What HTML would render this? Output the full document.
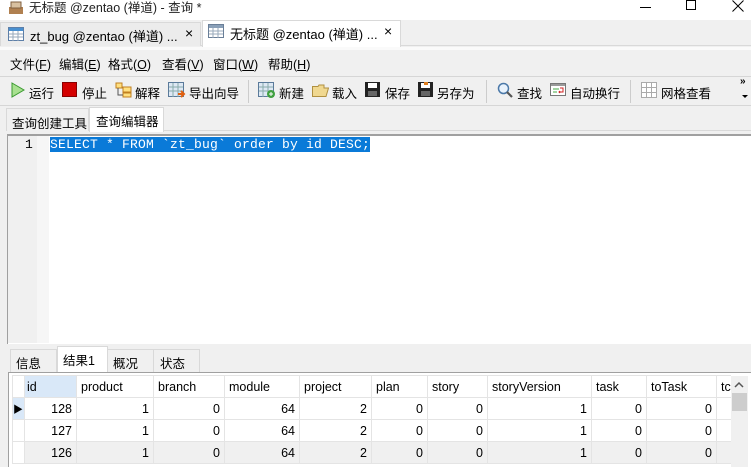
<!DOCTYPE html>
<html><head><meta charset="utf-8"><style>
*{margin:0;padding:0;box-sizing:border-box}
body{width:751px;height:467px;overflow:hidden;background:#f0f0f0;font-family:"Liberation Sans","Noto Sans CJK SC",sans-serif;font-size:12px;color:#000;position:relative}
.a{position:absolute;white-space:nowrap}
.ic{position:absolute}
td{border-right:1px solid #e4e4e4;border-bottom:1px solid #e4e4e4;padding:0 4px;height:22px;font-size:12.5px}
td.n{text-align:right}
.m{position:absolute;top:54px;font-size:12.5px;white-space:nowrap}
</style></head><body>
<div class="a" style="left:0;top:0;width:751px;height:20px;background:#fff"></div>
<svg class="ic" style="left:8px;top:1px" width="16" height="14"><rect x="1" y="6" width="14" height="7" fill="#b08050"/><rect x="3" y="1" width="10" height="6" fill="#d8c0a0" stroke="#806040"/></svg>
<div class="a" style="left:29px;top:0;font-size:12.5px;line-height:16px;color:#222">无标题 @zentao (禅道) - 查询 *</div>
<div class="a" style="left:640px;top:7px;width:11px;height:1px;background:#000"></div>
<div class="a" style="left:686px;top:0;width:10px;height:10px;border:1px solid #000"></div>
<svg class="ic" style="left:732px;top:0" width="12" height="12"><path d="M0.5 0.5L11.5 11.5M11.5 0.5L0.5 11.5" stroke="#000"/></svg>
<div class="a" style="left:0;top:21px;width:751px;height:25px;background:#f0f0f0;border-bottom:1px solid #d9d9d9"></div>
<div class="a" style="left:0;top:22px;width:201px;height:24px;background:#ececec;border:1px solid #d9d9d9;border-bottom:none"></div>
<svg class="ic" style="left:8px;top:27px" width="16" height="14"><rect x="0.5" y="0.5" width="15" height="13" fill="#fff" stroke="#5d7fa8"/><rect x="1" y="1" width="14" height="3" fill="#4a90d0"/><path d="M1 7H15M1 10H15M5 4V14M10 4V14" stroke="#9ab"/></svg>
<div class="a" style="left:30px;top:26px;font-size:13px">zt_bug @zentao (禅道) ...</div>
<div class="a" style="left:185px;top:25px;font-size:14px">×</div>
<div class="a" style="left:202px;top:20px;width:199px;height:27px;background:#fff;border:1px solid #d9d9d9;border-bottom:none"></div>
<svg class="ic" style="left:208px;top:24px" width="16" height="14"><rect x="0.5" y="0.5" width="15" height="13" fill="#fff" stroke="#6a7f98"/><rect x="1" y="1" width="14" height="3" fill="#8aa0b8"/><path d="M1 7H15M1 10H15M5 4V14M10 4V14" stroke="#9ab"/></svg>
<div class="a" style="left:230px;top:24px;font-size:13px">无标题 @zentao (禅道) ...</div>
<div class="a" style="left:384px;top:23px;font-size:14px">×</div>
<div class="a" style="left:0;top:47px;width:751px;height:3px;background:#fafafa"></div>
<div class="m" style="left:10px">文件(<u>F</u>)</div>
<div class="m" style="left:59px">编辑(<u>E</u>)</div>
<div class="m" style="left:108px">格式(<u>O</u>)</div>
<div class="m" style="left:162px">查看(<u>V</u>)</div>
<div class="m" style="left:213px">窗口(<u>W</u>)</div>
<div class="m" style="left:268px">帮助(<u>H</u>)</div>
<div class="a" style="left:0;top:76px;width:751px;height:1px;background:#d6d6d6"></div>
<svg class="ic" style="left:11px;top:82px" width="14" height="16"><path d="M1 1L13 8L1 15Z" fill="#a8e090" stroke="#3a9a30"/></svg>
<div class="a" style="left:29px;top:83px;font-size:12.5px">运行</div>
<div class="a" style="left:62px;top:82px;width:15px;height:15px;background:#d40000;border:1px solid #800"></div>
<div class="a" style="left:82px;top:83px;font-size:12.5px">停止</div>
<svg class="ic" style="left:115px;top:82px" width="17" height="16"><rect x="1" y="1" width="6" height="5" fill="#ffe080" stroke="#c08020"/><rect x="8" y="5" width="8" height="5" fill="#ffe080" stroke="#c08020"/><rect x="8" y="11" width="8" height="4" fill="#ffe080" stroke="#c08020"/><path d="M3 6V13H8" stroke="#555" fill="none"/></svg>
<div class="a" style="left:135px;top:83px;font-size:12.5px">解释</div>
<svg class="ic" style="left:168px;top:82px" width="18" height="16"><rect x="0.5" y="0.5" width="15" height="14" fill="#dde8f4" stroke="#5a7a9a"/><path d="M1 5H15M1 9H15M5 1V15M10 1V15" stroke="#8aa"/><path d="M10 12H16M13 9L16 12L13 15" stroke="#e06010" stroke-width="2" fill="none"/></svg>
<div class="a" style="left:189px;top:83px;font-size:12.5px">导出向导</div>
<div class="a" style="left:248px;top:80px;width:1px;height:23px;background:#ccc"></div>
<svg class="ic" style="left:258px;top:82px" width="18" height="16"><rect x="0.5" y="0.5" width="15" height="14" fill="#dde8f4" stroke="#5a7a9a"/><path d="M1 5H15M1 9H15M5 1V15M10 1V15" stroke="#8aa"/><circle cx="13" cy="12" r="4" fill="#40a040"/><path d="M11 12H15M13 10V14" stroke="#fff"/></svg>
<div class="a" style="left:279px;top:83px;font-size:12.5px">新建</div>
<svg class="ic" style="left:312px;top:84px" width="17" height="13"><path d="M0.5 2.5H6L7 1H12V4H16.5L14 12.5H0.5Z" fill="#f0d890" stroke="#b09040"/></svg>
<div class="a" style="left:332px;top:83px;font-size:12.5px">载入</div>
<svg class="ic" style="left:365px;top:82px" width="15" height="15"><rect x="0" y="0" width="15" height="15" fill="#222"/><rect x="3" y="1" width="9" height="5" fill="#fff"/><rect x="3" y="9" width="9" height="5" fill="#666"/></svg>
<div class="a" style="left:385px;top:83px;font-size:12.5px">保存</div>
<svg class="ic" style="left:418px;top:82px" width="15" height="15"><rect x="0" y="0" width="15" height="15" fill="#222"/><rect x="3" y="1" width="9" height="5" fill="#fff"/><rect x="3" y="9" width="9" height="5" fill="#666"/><rect x="6" y="0" width="4" height="3" fill="#e08020"/></svg>
<div class="a" style="left:437px;top:83px;font-size:12.5px">另存为</div>
<div class="a" style="left:486px;top:80px;width:1px;height:23px;background:#ccc"></div>
<svg class="ic" style="left:497px;top:82px" width="16" height="16"><circle cx="6.5" cy="6.5" r="5" fill="#e8f2fc" stroke="#4a78a8" stroke-width="1.5"/><path d="M10 10L15 15" stroke="#555" stroke-width="2.2"/></svg>
<div class="a" style="left:517px;top:83px;font-size:12.5px">查找</div>
<svg class="ic" style="left:550px;top:83px" width="16" height="13"><rect x="0.5" y="0.5" width="15" height="12" fill="#fff" stroke="#777"/><rect x="1" y="1" width="14" height="2" fill="#999"/><path d="M3 6H9M3 9H7" stroke="#4a4"/><path d="M10 5H13V9H9M10 8L9 9L10 10" stroke="#d02020" fill="none"/></svg>
<div class="a" style="left:570px;top:83px;font-size:12.5px">自动换行</div>
<div class="a" style="left:630px;top:80px;width:1px;height:23px;background:#ccc"></div>
<svg class="ic" style="left:641px;top:82px" width="16" height="16"><path d="M0.5 0.5H15.5V15.5H0.5ZM0.5 5.5H15.5M0.5 10.5H15.5M5.5 0.5V15.5M10.5 0.5V15.5" stroke="#aaa" fill="#fff"/></svg>
<div class="a" style="left:661px;top:83px;font-size:12.5px">网格查看</div>
<div class="a" style="left:740px;top:76px;font-size:10px;font-weight:bold">»</div>
<div class="a" style="left:742px;top:95px;width:0;height:0;border:3px solid transparent;border-top:3px solid #000"></div>
<div class="a" style="left:0;top:105px;width:751px;height:1px;background:#d6d6d6"></div>
<div class="a" style="left:6px;top:108px;width:83px;height:23px;border:1px solid #d9d9d9;border-bottom:none;background:#f0f0f0"></div>
<div class="a" style="left:12px;top:113px;font-size:12.5px">查询创建工具</div>
<div class="a" style="left:89px;top:107px;width:75px;height:25px;background:#fff;border:1px solid #d9d9d9;border-bottom:none"></div>
<div class="a" style="left:96px;top:111px;font-size:12.5px">查询编辑器</div>
<div class="a" style="left:164px;top:130px;width:587px;height:1px;background:#d9d9d9"></div>
<div class="a" style="left:7px;top:134px;width:744px;height:210px;background:#fff;border-top:2px solid #a0a0a0;border-left:1px solid #a0a0a0"></div>
<div class="a" style="left:8px;top:136px;width:29px;height:207px;background:#f0f0f0"></div>
<div class="a" style="left:37px;top:136px;width:12px;height:207px;background:#f6f6f6"></div>
<div class="a" style="left:25px;top:137px;font-family:'Liberation Mono',monospace;font-size:13px;line-height:15px">1</div>
<div class="a" style="left:50px;top:137px;height:15px;background:#0a7ad8;color:#fff;font-family:'Liberation Mono',monospace;font-size:13px;line-height:15px;letter-spacing:0.2px">SELECT * FROM `zt_bug` order by id DESC;</div>
<div class="a" style="left:0;top:344px;width:751px;height:4px;background:#f0f0f0"></div>
<div class="a" style="left:10px;top:349px;width:47px;height:24px;border:1px solid #d9d9d9;border-bottom:none"></div>
<div class="a" style="left:16px;top:353px;font-size:12.5px">信息</div>
<div class="a" style="left:57px;top:346px;width:51px;height:27px;background:#fff;border:1px solid #d9d9d9;border-bottom:none"></div>
<div class="a" style="left:63px;top:350px;font-size:12.5px">结果1</div>
<div class="a" style="left:108px;top:349px;width:46px;height:24px;border:1px solid #d9d9d9;border-bottom:none;border-left:none"></div>
<div class="a" style="left:113px;top:353px;font-size:12.5px">概况</div>
<div class="a" style="left:154px;top:349px;width:46px;height:24px;border:1px solid #d9d9d9;border-bottom:none;border-left:none"></div>
<div class="a" style="left:160px;top:353px;font-size:12.5px">状态</div>
<div class="a" style="left:8px;top:372px;width:743px;height:95px;background:#fff;border-top:1px solid #a0a0a0;border-left:1px solid #a0a0a0"></div>
<div class="a" style="left:12px;top:375px;width:719px;overflow:hidden">
<table style="border-collapse:collapse;table-layout:fixed;width:736px;border-top:1px solid #e4e4e4;border-left:1px solid #e4e4e4">
<colgroup><col style="width:12px"><col style="width:52px"><col style="width:77px"><col style="width:71px"><col style="width:75px"><col style="width:72px"><col style="width:56px"><col style="width:60px"><col style="width:104px"><col style="width:55px"><col style="width:70px"><col style="width:32px"></colgroup>
<tr><td style="padding:0"></td><td style="background:#d9e8f8;padding:0 2px">id</td><td>product</td><td>branch</td><td>module</td><td>project</td><td>plan</td><td>story</td><td>storyVersion</td><td>task</td><td>toTask</td><td>tc</td></tr>
<tr><td style="padding:0;background:#d9e8f8;font-size:10px">&#9654;</td><td class="n">128</td><td class="n">1</td><td class="n">0</td><td class="n">64</td><td class="n">2</td><td class="n">0</td><td class="n">0</td><td class="n">1</td><td class="n">0</td><td class="n">0</td><td></td></tr>
<tr><td style="padding:0"></td><td class="n">127</td><td class="n">1</td><td class="n">0</td><td class="n">64</td><td class="n">2</td><td class="n">0</td><td class="n">0</td><td class="n">1</td><td class="n">0</td><td class="n">0</td><td></td></tr>
<tr style="background:#f0f0f0"><td style="padding:0;background:#fff"></td><td class="n">126</td><td class="n">1</td><td class="n">0</td><td class="n">64</td><td class="n">2</td><td class="n">0</td><td class="n">0</td><td class="n">1</td><td class="n">0</td><td class="n">0</td><td></td></tr>
</table></div>
<div class="a" style="left:731px;top:376px;width:17px;height:91px;background:#f0f0f0"></div>
<svg class="ic" style="left:734px;top:381px" width="10" height="7"><path d="M1 6L5 2L9 6" stroke="#555" stroke-width="1.5" fill="none"/></svg>
<div class="a" style="left:732px;top:393px;width:15px;height:18px;background:#cdcdcd"></div>
</body></html>
